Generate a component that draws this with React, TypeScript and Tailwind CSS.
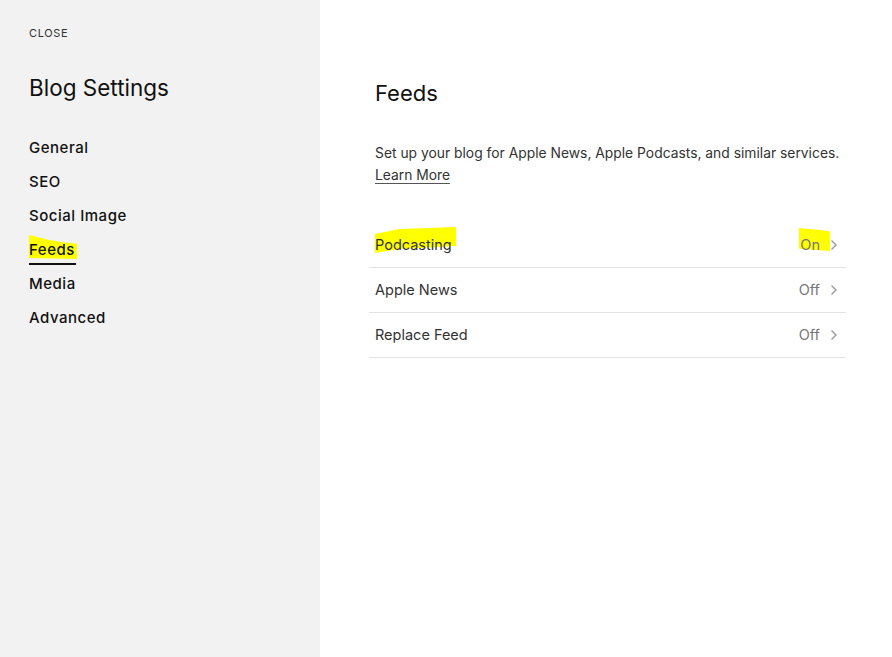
import React from "react";

const font = { fontFamily: "Inter, 'Noto Sans', 'Liberation Sans', sans-serif" };

function Highlight({ className, points }: { className: string; points: string }) {
  return (
    <svg className={`absolute pointer-events-none ${className}`} viewBox="0 0 100 100" preserveAspectRatio="none">
      <polygon points={points} fill="#ffff00" />
    </svg>
  );
}

function Chevron() {
  return (
    <svg width="8" height="12" viewBox="0 0 8 12" className="ml-[10px]">
      <path d="M1.5 1.5 L6 6 L1.5 10.5" fill="none" stroke="#9a9a9a" strokeWidth="1.4" />
    </svg>
  );
}

const navItems = ["General", "SEO", "Social Image", "Feeds", "Media", "Advanced"];

export default function App() {
  return (
    <div className="flex w-[892px] h-[657px] bg-white text-[#1a1a1a]" style={font}>
      <aside className="w-[320px] shrink-0 bg-[#f2f2f2] pl-[29px] pt-[25px]">
        <div className="text-[11px] leading-[16px] tracking-[0.06em] text-[#333]">CLOSE</div>
        <h1 className="mt-[33px] text-[22.5px] leading-[28px] font-normal text-[#111]">Blog Settings</h1>
        <nav className="mt-[36px] flex flex-col gap-[14px]">
          {navItems.map((item) => (
            <div key={item} className="text-[15px] leading-[20px] font-medium tracking-[0.035em] text-[#111]">
              {item === "Feeds" ? (
                <span className="relative inline-block">
                  <Highlight className="left-[0px] top-[-5px] w-[48px] h-[24px]" points="0,0 40,20 70,30 100,36 100,100 0,96" />
                  <span className="relative">{item}</span>
                  <span className="absolute left-0 right-[-1px] top-[23px] h-[2px] bg-[#111]" />
                </span>
              ) : (
                item
              )}
            </div>
          ))}
        </nav>
      </aside>
      <main className="flex-1 pl-[55px] pr-[46px] pt-[79px]">
        <h2 className="text-[22px] leading-[28px] font-normal text-[#111]">Feeds</h2>
        <p className="mt-[35px] text-[13.85px] leading-[22px] text-[#333] whitespace-nowrap">
          Set up your blog for Apple News, Apple Podcasts, and similar services.
          <br />
          <span className="border-b border-[#555]">Learn More</span>
        </p>
        <div className="mt-[37px] -ml-[6px]">
          {[
            { label: "Podcasting", value: "On", hl: true },
            { label: "Apple News", value: "Off", hl: false },
            { label: "Replace Feed", value: "Off", hl: false },
          ].map((r) => (
            <div key={r.label} className="h-[45px] flex items-center justify-between pl-[6px] pr-[8px] border-b border-[#e3e3e3] text-[14.5px] text-[#333]">
              <span className="relative">
                {r.hl && (
                  <Highlight className="left-[0px] top-[-7px] w-[81px] h-[26px]" points="0,27 30,8 100,0 100,73 30,85 0,100" />
                )}
                <span className="relative">{r.label}</span>
              </span>
              <span className="flex items-center">
                <span className="relative text-[#777]">
                  {r.hl && (
                    <Highlight className="left-[-1px] top-[-6px] w-[31px] h-[23px]" points="0,0 60,8 100,14 100,100 0,90" />
                  )}
                  <span className="relative">{r.value}</span>
                </span>
                <Chevron />
              </span>
            </div>
          ))}
        </div>
      </main>
    </div>
  );
}
